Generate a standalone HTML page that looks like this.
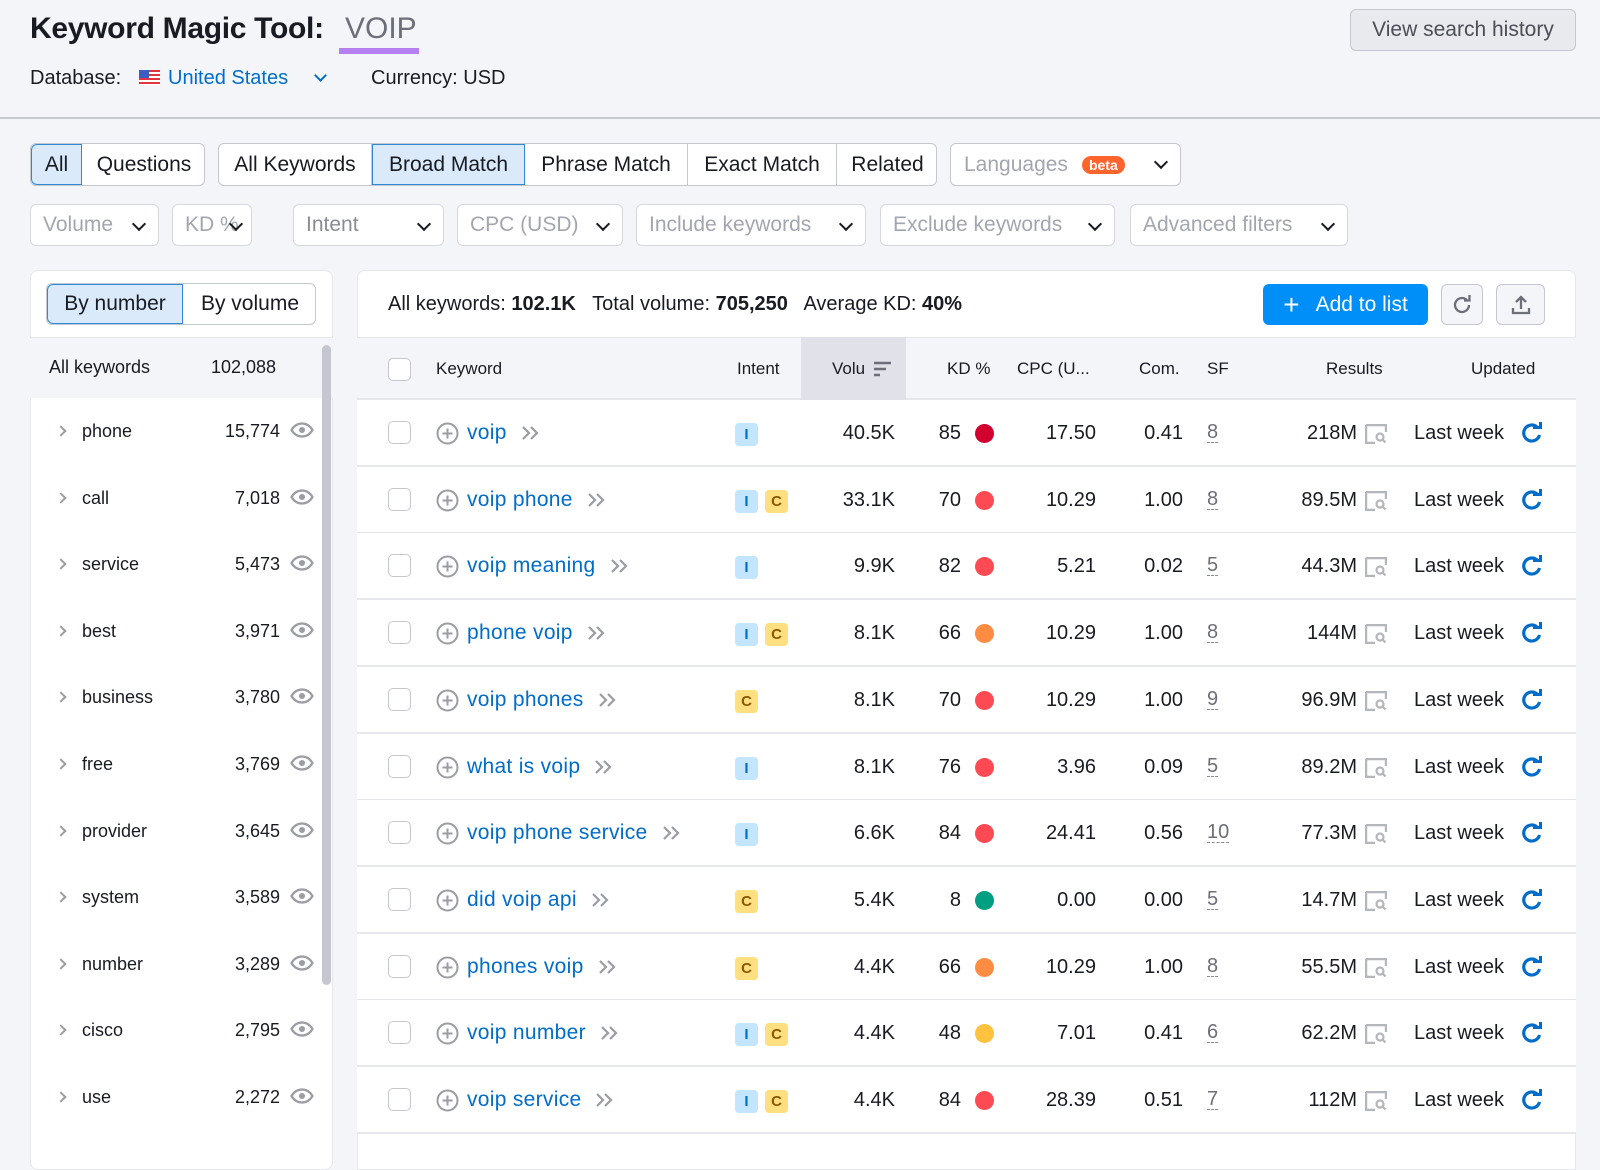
<!DOCTYPE html>
<html><head><meta charset="utf-8">
<style>
*{box-sizing:border-box;margin:0;padding:0}
body{width:1600px;height:1149px;overflow:hidden;background:#f4f5f9;font-family:"Liberation Sans",Arial,sans-serif;color:#191b23;position:relative}
.a{position:absolute}
.btn{position:absolute;border:1px solid #c4c7cf;background:#fff;border-radius:6px;display:flex;align-items:center;font-size:20px;height:42px}
.seg{position:absolute;top:0;height:100%;display:flex;align-items:center;justify-content:center;border-right:1px solid #c4c7cf;font-size:21px;color:#191b23}
.sel{background:#daeafa;border:1px solid #2f8ad8 !important;}
.flt{position:absolute;top:204px;height:42px;border:1px solid #d6d8de;background:#fff;border-radius:6px;display:flex;align-items:center;padding-left:12px;font-size:21px;color:#a3a6af;white-space:nowrap}
.chev{position:absolute;right:14px;top:14px;width:10px;height:10px;border-right:2.5px solid #191b23;border-bottom:2.5px solid #191b23;transform:rotate(45deg)}
.li{position:absolute;left:30px;width:290px;height:66px;font-size:18px}
.li .c{position:absolute;left:27px;top:28px;width:8px;height:8px;border-right:2px solid #9a9da5;border-top:2px solid #9a9da5;transform:rotate(45deg)}
.li .t{position:absolute;left:52px;top:22px}
.li .n{position:absolute;right:40px;top:22px}
.eye{position:absolute;right:6px;top:23px;width:24px;height:16px}
.row{position:absolute;left:357px;width:1219px;height:67px;border-bottom:2px solid #e6e7eb;background:#fff;font-size:20px}
.row>*{position:absolute}
.cb{left:31px;top:21px;width:23px;height:23px;border:1px solid #c4c7cf;border-radius:5px}
.pl{left:79px;top:22px;width:23px;height:23px}
.kw{left:110px;top:21px;color:#006dca;white-space:nowrap;font-size:21px;letter-spacing:0.3px;display:flex;align-items:center}
.kw svg{margin-left:14px}
.bi,.bc{top:23px;width:23px;height:23px;border-radius:4px;font-size:15px;font-weight:bold;display:flex;align-items:center;justify-content:center}
.bi{left:378px;background:#c4e5fe;color:#006dca}
.bc{left:408px;background:#ffdf80;color:#8b5a00}
.vol{right:681px;top:22px}
.kd{right:615px;top:22px}
.dot{left:618px;top:24px;width:19px;height:19px;border-radius:50%}
.cpc{right:480px;top:22px}
.com{right:393px;top:22px}
.sf{left:850px;top:22px;color:#6c6e79;border-bottom:1px dashed #8a8c94;line-height:20px}
.res{right:219px;top:22px}
.ri{left:1008px;top:24px;width:22px;height:20px}
.lw{left:1057px;top:22px}
.rf{left:1164px;top:22px;width:22px;height:22px}
.h{position:absolute;top:369px;font-size:17px;color:#191b23;transform:translateY(-50%)}
</style></head><body>
<div class="a" style="left:30px;top:12px;font-size:30px;font-weight:bold;letter-spacing:-0.3px">Keyword Magic Tool:</div>
<div class="a" style="left:345px;top:12px;font-size:30px;color:#6c6e79">VOIP</div>
<div class="a" style="left:339px;top:48px;width:80px;height:6px;background:#b57ff0"></div>
<div class="a" style="left:30px;top:67px;font-size:20px">Database:</div>
<div class="a" style="left:139px;top:70px;width:21px;height:15px;background:repeating-linear-gradient(#e0353f 0 2px,#fff 2px 4px)"><div style="width:10px;height:8px;background:#3b5fc0"></div></div>
<div class="a" style="left:168px;top:67px;font-size:20px;color:#006dca">United States</div>
<div class="a" style="left:316px;top:71px;width:9px;height:9px;border-right:2.5px solid #006dca;border-bottom:2.5px solid #006dca;transform:rotate(45deg)"></div>
<div class="a" style="left:371px;top:67px;font-size:20px">Currency: USD</div>
<div class="btn" style="left:1350px;top:9px;width:226px;height:42px;background:#e9eaee;color:#4b4e57;justify-content:center;font-size:21px">View search history</div>
<div class="a" style="left:0;top:117px;width:1600px;height:2px;background:#c8cad1"></div>

<div class="btn" style="left:30px;top:143px;width:175px;height:43px;overflow:hidden">
 <div class="seg sel" style="left:0;width:51px;border-radius:6px 0 0 6px">All</div>
 <div class="seg" style="left:51px;width:124px;border:none">Questions</div>
</div>
<div class="btn" style="left:218px;top:143px;width:719px;height:43px;overflow:hidden">
 <div class="seg" style="left:0;width:153px">All Keywords</div>
 <div class="seg sel" style="left:153px;width:153px">Broad Match</div>
 <div class="seg" style="left:306px;width:163px">Phrase Match</div>
 <div class="seg" style="left:469px;width:149px">Exact Match</div>
 <div class="seg" style="left:618px;width:101px;border:none">Related</div>
</div>
<div class="btn" style="left:950px;top:143px;width:231px;height:43px;padding-left:13px;color:#a3a6af;font-size:21px">Languages <span style="margin-left:14px;background:#ff642d;color:#fff;font-size:14px;font-weight:bold;border-radius:9px;padding:1px 7px">beta</span><span class="chev" style="top:13px"></span></div>

<div class="flt" style="left:30px;width:129px">Volume<span class="chev"></span></div>
<div class="flt" style="left:172px;width:80px">KD %<span class="chev" style="right:10px"></span></div>
<div class="flt" style="left:293px;width:151px;color:#8a8c94">Intent<span class="chev"></span></div>
<div class="flt" style="left:457px;width:166px">CPC (USD)<span class="chev"></span></div>
<div class="flt" style="left:636px;width:230px">Include keywords<span class="chev"></span></div>
<div class="flt" style="left:880px;width:235px">Exclude keywords<span class="chev"></span></div>
<div class="flt" style="left:1130px;width:218px">Advanced filters<span class="chev"></span></div>

<div class="a" style="left:30px;top:270px;width:303px;height:900px;background:#fff;border-radius:8px;border:1px solid #e6e7eb"></div>
<div class="btn" style="left:46px;top:283px;width:270px;height:42px;overflow:hidden">
 <div class="seg sel" style="left:0;width:136px;border-radius:6px 0 0 6px">By number</div>
 <div class="seg" style="left:136px;width:134px;border:none">By volume</div>
</div>
<div class="a" style="left:30px;top:337px;width:303px;height:61px;background:#f4f5f9;border-top:1px solid #e6e7eb"></div>
<div class="a" style="left:49px;top:357px;font-size:18px">All keywords</div>
<div class="a" style="left:211px;top:357px;font-size:18px">102,088</div>
<div class="a" style="left:322px;top:345px;width:9px;height:640px;background:#c4c7cf;border-radius:5px"></div>

<div id="list"></div>

<div class="a" style="left:357px;top:270px;width:1219px;height:900px;background:#fff;border-radius:8px 8px 0 0;border:1px solid #e6e7eb"></div>
<div class="a" style="left:388px;top:293px;font-size:20px;white-space:nowrap">All keywords: <b>102.1K</b>&nbsp;&nbsp; Total volume: <b>705,250</b>&nbsp;&nbsp; Average KD: <b>40%</b></div>
<div class="a" style="left:1263px;top:284px;width:165px;height:41px;background:#008ff8;border-radius:6px;color:#fff;font-size:21px;display:flex;align-items:center;justify-content:center"><span style="font-size:28px;margin-right:16px;line-height:20px">+</span>Add to list</div>
<div class="btn" style="left:1441px;top:284px;width:42px;height:41px;background:#f4f5f9;justify-content:center">
<svg width="22" height="22" viewBox="0 0 22 22"><path d="M18 11a7 7 0 1 1-2.3-5.2" fill="none" stroke="#6c6e79" stroke-width="2.3"/><path d="M13 4.5h5.5V-1" fill="none" stroke="#6c6e79" stroke-width="2.3" transform="translate(0,2)"/></svg></div>
<div class="btn" style="left:1496px;top:284px;width:49px;height:41px;background:#f4f5f9;justify-content:center">
<svg width="22" height="22" viewBox="0 0 22 22"><path d="M11 15V3M6 8l5-5 5 5M3 14v5h16v-5" fill="none" stroke="#6c6e79" stroke-width="2.3"/></svg></div>

<div class="a" style="left:357px;top:337px;width:1219px;height:63px;background:#f4f5f9;border-top:1px solid #e6e7eb;border-bottom:2px solid #e6e7eb"></div>
<div class="a" style="left:801px;top:337px;width:105px;height:63px;background:#e0e1e9"></div>
<div class="a" style="left:388px;top:358px;width:23px;height:23px;border:1px solid #c4c7cf;border-radius:5px;background:#fff"></div>
<div class="h" style="left:436px">Keyword</div>
<div class="h" style="left:737px">Intent</div>
<div class="h" style="left:832px">Volu</div>
<svg class="a" style="left:873px;top:361px" width="20" height="16"><path d="M1 2h17M1 8h12M1 14h6" stroke="#6c6e79" stroke-width="2.5"/></svg>
<div class="h" style="left:947px">KD %</div>
<div class="h" style="left:1017px">CPC (U...</div>
<div class="h" style="left:1139px">Com.</div>
<div class="h" style="left:1207px">SF</div>
<div class="h" style="left:1326px">Results</div>
<div class="h" style="left:1471px">Updated</div>
<div id="rows"></div>

<script>
var L=[["phone","15,774"],["call","7,018"],["service","5,473"],["best","3,971"],["business","3,780"],["free","3,769"],["provider","3,645"],["system","3,589"],["number","3,289"],["cisco","2,795"],["use","2,272"]];
var eye='<svg class="eye" viewBox="0 0 24 16"><path d="M1.5 8C4.5 3 8 1.5 12 1.5S19.5 3 22.5 8C19.5 13 16 14.5 12 14.5S4.5 13 1.5 8Z" fill="none" stroke="#9a9da5" stroke-width="2.2"/><circle cx="12" cy="8" r="3" fill="#9a9da5"/></svg>';
var h='';L.forEach(function(r,i){var y=399+i*66.6;h+='<div class="li" style="top:'+y+'px"><span class="c"></span><span class="t">'+r[0]+'</span><span class="n">'+r[1]+'</span>'+eye+'</div>';});
document.getElementById('list').innerHTML=h;
var R=[["voip","I","40.5K","85","#d1002f","17.50","0.41","8","218M"],
["voip phone","IC","33.1K","70","#ff4953","10.29","1.00","8","89.5M"],
["voip meaning","I","9.9K","82","#ff4953","5.21","0.02","5","44.3M"],
["phone voip","IC","8.1K","66","#ff8c43","10.29","1.00","8","144M"],
["voip phones","C","8.1K","70","#ff4953","10.29","1.00","9","96.9M"],
["what is voip","I","8.1K","76","#ff4953","3.96","0.09","5","89.2M"],
["voip phone service","I","6.6K","84","#ff4953","24.41","0.56","10","77.3M"],
["did voip api","C","5.4K","8","#009f81","0.00","0.00","5","14.7M"],
["phones voip","C","4.4K","66","#ff8c43","10.29","1.00","8","55.5M"],
["voip number","IC","4.4K","48","#ffc23e","7.01","0.41","6","62.2M"],
["voip service","IC","4.4K","84","#ff4953","28.39","0.51","7","112M"]];
var plus='<svg class="pl" viewBox="0 0 23 23"><circle cx="11.5" cy="11.5" r="10" fill="none" stroke="#9a9da5" stroke-width="2"/><path d="M11.5 6.5v10M6.5 11.5h10" stroke="#9a9da5" stroke-width="2"/></svg>';
var dc='<svg width="20" height="16" viewBox="0 0 20 16"><path d="M2 2l6 6-6 6M10 2l6 6-6 6" fill="none" stroke="#9a9da5" stroke-width="2.2"/></svg>';
var ri='<svg class="ri" viewBox="0 0 22 20"><path d="M1 1h20v7M1 1v18h9" fill="none" stroke="#b4b6bd" stroke-width="2.4"/><circle cx="15" cy="13" r="3.5" fill="none" stroke="#b4b6bd" stroke-width="2.2"/><path d="M17.5 15.5l3 3" stroke="#b4b6bd" stroke-width="2.2"/></svg>';
var rf='<svg class="rf" viewBox="0 0 22 22"><path d="M18.5 13A8 8 0 1 1 16 5" fill="none" stroke="#006dca" stroke-width="3.2"/><path d="M12 4.5h7.5V-3" fill="none" stroke="#006dca" stroke-width="3" transform="translate(0,1)"/></svg>';
h='';R.forEach(function(r,i){var y=400+i*66.7;
var b='';if(r[1]=="I")b='<span class="bi">I</span>';else if(r[1]=="C")b='<span class="bc" style="left:378px">C</span>';else b='<span class="bi">I</span><span class="bc">C</span>';
h+='<div class="row" style="top:'+y+'px"><span class="cb"></span>'+plus+'<span class="kw">'+r[0]+dc+'</span>'+b+'<span class="vol">'+r[2]+'</span><span class="kd">'+r[3]+'</span><span class="dot" style="background:'+r[4]+'"></span><span class="cpc">'+r[5]+'</span><span class="com">'+r[6]+'</span><span class="sf">'+r[7]+'</span><span class="res">'+r[8]+'</span>'+ri+'<span class="lw">Last week</span>'+rf+'</div>';});
document.getElementById('rows').innerHTML=h;
</script>
</body></html>
